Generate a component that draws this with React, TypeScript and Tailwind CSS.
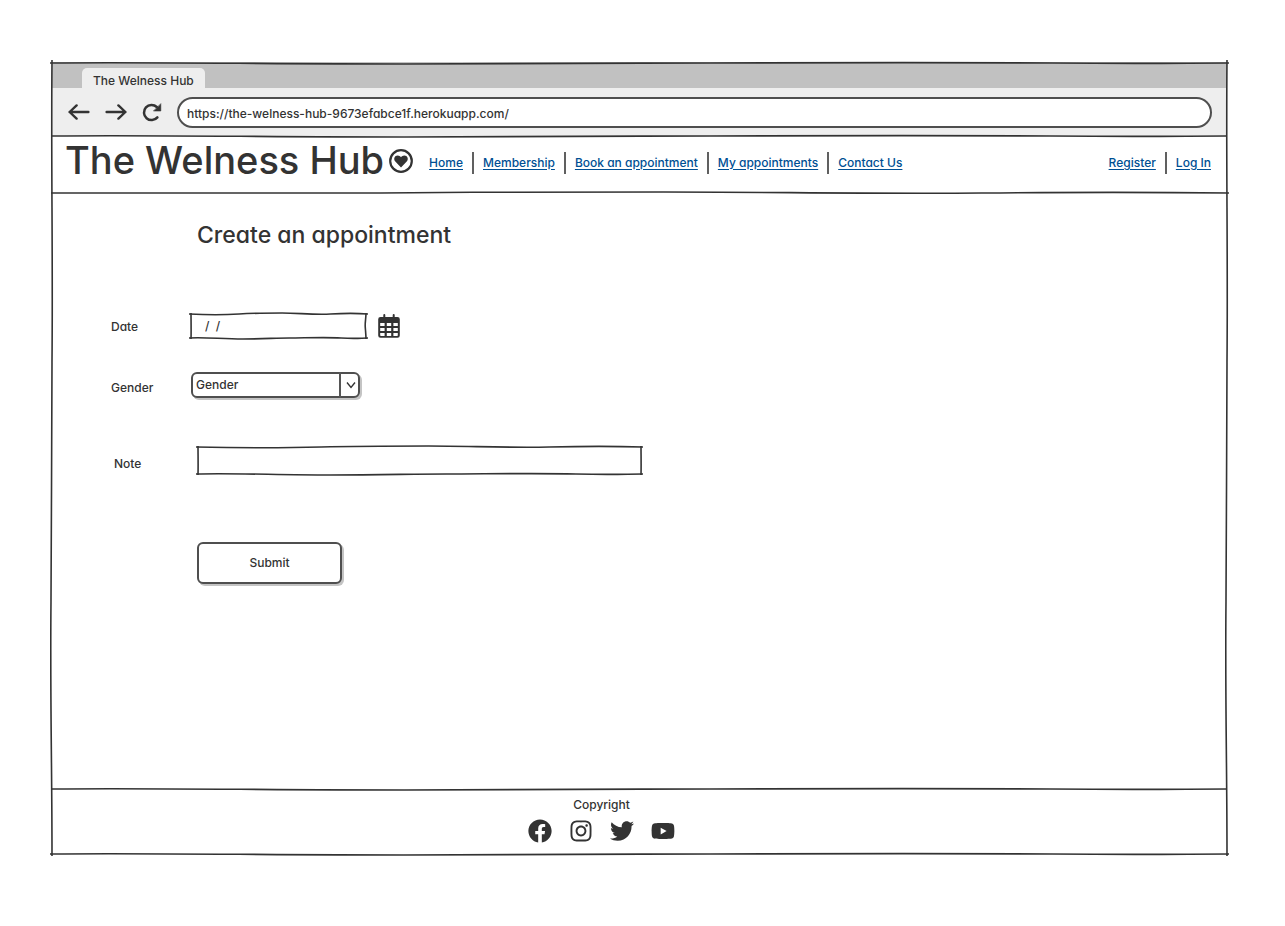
import type { ReactNode } from "react";
import { FaFacebook, FaInstagram, FaTwitter, FaYoutube } from "react-icons/fa";

const LINE_DOWN = "M0 2 C90 1 180 3 300 3 S480 2 560 2 S760 1 850 2 S960 2 1000 2";
const LINE_UP = "M0 2 C100 3 200 3 280 2 S430 1 520 1 S700 3 790 2 S930 1 1000 2";
const SIDE_LONG = "M2 0 C1 120 3 250 2 380 S2 560 1 680 S2 880 2 1000";
const SIDE_STRAIGHT = "M2 0 C2 300 2.3 600 2 1000";
const SIDE_BOWED = "M2 0 C2 200 1 350 1.2 500 S2 850 2 1000";

function HLine({ up = false, className }: { up?: boolean; className: string }) {
  return (
    <svg
      aria-hidden="true"
      viewBox="0 0 1000 4"
      preserveAspectRatio="none"
      className={"pointer-events-none absolute h-1 " + className}
      fill="none"
      stroke="#333333"
      strokeWidth="1.6"
    >
      <path d={up ? LINE_UP : LINE_DOWN} vectorEffect="non-scaling-stroke" />
    </svg>
  );
}

function VLine({ path = SIDE_LONG, className }: { path?: string; className: string }) {
  return (
    <svg
      aria-hidden="true"
      viewBox="0 0 4 1000"
      preserveAspectRatio="none"
      className={"pointer-events-none absolute w-1 " + className}
      fill="none"
      stroke="#333333"
      strokeWidth="1.6"
    >
      <path d={path} vectorEffect="non-scaling-stroke" />
    </svg>
  );
}

function BoxLines({ bowed = false }: { bowed?: boolean }) {
  return (
    <>
      <HLine className="-left-px -top-px w-[calc(100%+2px)]" up />
      <HLine className="-left-px -bottom-px w-[calc(100%+2px)]" />
      <VLine path={SIDE_STRAIGHT} className="-left-px top-0 h-full" />
      <VLine path={bowed ? SIDE_BOWED : SIDE_STRAIGHT} className="-right-px top-0 h-full" />
    </>
  );
}

function NavLink({ children }: { children: ReactNode }) {
  return (
    <a href="#" className="text-[#004f93] underline underline-offset-2">
      {children}
    </a>
  );
}

function Divider() {
  return <span aria-hidden="true" className="h-[22px] w-[2px] bg-[#606060]" />;
}

function ArrowIcon({ className }: { className?: string }) {
  return (
    <svg
      viewBox="0 0 22 16"
      className={"h-4 w-[22px] " + (className ?? "")}
      fill="none"
      stroke="#333333"
      strokeWidth="2.4"
      strokeLinecap="round"
      strokeLinejoin="round"
    >
      <path d="M20.4 8 H1.6 M8.6 1.4 L1.6 8 L8.6 14.6" />
    </svg>
  );
}

function ReloadIcon() {
  return (
    <svg viewBox="0 0 20 20" className="size-5" fill="none" stroke="#333333" strokeWidth="2.5" strokeLinecap="round">
      <path d="M15.4 15.4 A7.6 7.6 0 1 1 14.8 5" />
      <path d="M18.8 2 V9 H11.8 Z" fill="#333333" stroke="#333333" strokeWidth="0.6" strokeLinejoin="round" />
    </svg>
  );
}

function HeartBadge() {
  return (
    <svg viewBox="0 0 24 24" className="size-6" aria-hidden="true">
      <circle cx="12" cy="12" r="10.8" fill="none" stroke="#333333" strokeWidth="2.2" />
      <path
        d="M12 18.6 L6.3 12.6 C4.7 10.9 4.9 8.3 6.6 7 C8.5 5.8 10.9 6.4 12 8.3 C13.1 6.4 15.5 5.8 17.4 7 C19.1 8.3 19.3 10.9 17.7 12.6 Z"
        fill="#333333"
      />
    </svg>
  );
}

function CalendarIcon() {
  return (
    <svg viewBox="0 0 22 24" className="h-6 w-[22px]" aria-hidden="true">
      <path
        d="M2.5 3 H19.5 A2.3 2.3 0 0 1 21.8 5.3 V21.5 A2.3 2.3 0 0 1 19.5 23.8 H2.5 A2.3 2.3 0 0 1 0.2 21.5 V5.3 A2.3 2.3 0 0 1 2.5 3 Z"
        fill="#333333"
      />
      <path d="M6.3 1 V4 M15.7 1 V4" stroke="#333333" strokeWidth="2" strokeLinecap="round" />
      <path
        fill="#ffffff"
        d="M2.2 9 H6.6 V12 H2.2 Z M8.8 9 H13.2 V12 H8.8 Z M15.4 9 H19.8 V12 H15.4 Z M2.2 14 H6.6 V17 H2.2 Z M8.8 14 H13.2 V17 H8.8 Z M15.4 14 H19.8 V17 H15.4 Z M2.2 19 H6.6 V22 H2.8 L2.2 21.4 Z M8.8 19 H13.2 V22 H8.8 Z M15.4 19 H19.8 V21.4 L19.2 22 H15.4 Z"
      />
    </svg>
  );
}

export default function App() {
  return (
    <div className="flex min-h-screen flex-col bg-white pt-[62px] pr-[58px] pb-[72px] pl-[52px] font-['Inter',sans-serif] text-[12px] leading-5 font-medium text-[#333333] [font-feature-settings:'cv11']">
      <div className="relative flex grow flex-col">
        <div className="flex h-[26px] items-end bg-[#c1c1c1] pl-[30px]">
          <div className="flex h-5 items-center rounded-t-[5px] bg-[#eeeeee] px-[11px] pt-[6px]">The Welness Hub</div>
        </div>

        <div className="relative flex h-12 items-center gap-[15px] bg-[#eeeeee] pr-[15px] pl-4">
          <button type="button" aria-label="Back">
            <ArrowIcon />
          </button>
          <button type="button" aria-label="Forward">
            <ArrowIcon className="rotate-180" />
          </button>
          <button type="button" aria-label="Reload">
            <ReloadIcon />
          </button>
          <input
            type="text"
            aria-label="Address"
            defaultValue="https://the-welness-hub-9673efabce1f.herokuapp.com/"
            className="h-[31px] min-w-0 grow rounded-full border-2 border-[#4f4f4f] bg-white px-2 pt-[2px] outline-none"
          />
          <HLine className="-bottom-0.5 left-0 w-full" />
        </div>

        <header className="relative flex h-[57px] items-center pr-4 pl-[13px] pb-1">
          <div className="flex items-center gap-[5px] pb-[3px]">
            <span className="pb-[2px] text-[38px] leading-[46px]">The Welness Hub</span>
            <HeartBadge />
          </div>
          <nav className="ml-4 flex items-center gap-[9px]">
            <NavLink>Home</NavLink>
            <Divider />
            <NavLink>Membership</NavLink>
            <Divider />
            <NavLink>Book an appointment</NavLink>
            <Divider />
            <NavLink>My appointments</NavLink>
            <Divider />
            <NavLink>Contact Us</NavLink>
          </nav>
          <nav className="ml-auto flex items-center gap-[9px]">
            <NavLink>Register</NavLink>
            <Divider />
            <NavLink>Log In</NavLink>
          </nav>
          <HLine up className="-bottom-0.5 -left-px w-[calc(100%+3px)]" />
        </header>

        <main className="grow pt-6 pb-10 pl-[59px]">
          <h1 className="pl-[86px] text-[23px] leading-9">Create an appointment</h1>
          <form className="pt-[59px]">
            <div className="flex h-[27px] items-center">
              <label htmlFor="date" className="w-[79px] pt-[2px]">
                Date
              </label>
              <div className="relative h-[26px] w-[177px]">
                <input
                  id="date"
                  type="text"
                  defaultValue="/  /"
                  className="h-full w-full bg-transparent px-[15px] outline-none whitespace-pre"
                />
                <BoxLines bowed />
              </div>
              <button type="button" aria-label="Choose a date" className="ml-[11px]">
                <CalendarIcon />
              </button>
            </div>

            <div className="mt-8 flex h-7 items-center">
              <label htmlFor="gender" className="w-20 pt-[6px]">
                Gender
              </label>
              <div className="relative h-[26px] w-[169px]">
                <select
                  id="gender"
                  className="h-full w-full appearance-none rounded-md border-2 border-[#4f4f4f] bg-white pl-[3px] shadow-[2px_2px_0_#c4c4c4] outline-none"
                >
                  <option>Gender</option>
                </select>
                <span className="pointer-events-none absolute top-0 right-0 flex h-full w-[21px] items-center justify-center border-l-2 border-[#555555]">
                  <svg viewBox="0 0 10 8" className="h-2 w-[10px]" fill="none" stroke="#333333" strokeWidth="1.4">
                    <path d="M1 1.5 L5 6.5 L9 1.5" />
                  </svg>
                </span>
              </div>
            </div>

            <div className="mt-[47px] flex h-[29px] items-center pl-[3px]">
              <label htmlFor="note" className="w-[83px] pt-[6px]">
                Note
              </label>
              <div className="relative h-[29px] w-[445px]">
                <input id="note" type="text" className="h-full w-full bg-transparent px-2 outline-none" />
                <BoxLines />
              </div>
            </div>

            <button
              type="submit"
              className="mt-[67px] ml-[86px] h-[42px] w-[145px] rounded-md border-2 border-[#4f4f4f] bg-white shadow-[2px_2px_0_#c4c4c4]"
            >
              Submit
            </button>
          </form>
        </main>

        <footer className="relative flex h-[65px] flex-col items-center pt-[6px] pr-[76px]">
          <HLine className="-top-0.5 left-0 w-full" />
          <p>Copyright</p>
          <div className="mt-1 flex items-center gap-[17px]">
            <a href="#" aria-label="Facebook">
              <FaFacebook className="size-6" />
            </a>
            <a href="#" aria-label="Instagram">
              <FaInstagram className="size-6" />
            </a>
            <a href="#" aria-label="Twitter">
              <FaTwitter className="size-6" />
            </a>
            <a href="#" aria-label="YouTube">
              <FaYoutube className="size-6" />
            </a>
          </div>
        </footer>

        <HLine className="-top-px -left-0.5 w-[calc(100%+4px)]" />
        <HLine className="-bottom-0.5 -left-0.5 w-[calc(100%+4px)]" />
        <VLine className="-top-0.5 -left-0.5 h-[calc(100%+4px)]" />
        <VLine className="-top-0.5 -right-0.5 h-[calc(100%+4px)]" />
      </div>
    </div>
  );
}
